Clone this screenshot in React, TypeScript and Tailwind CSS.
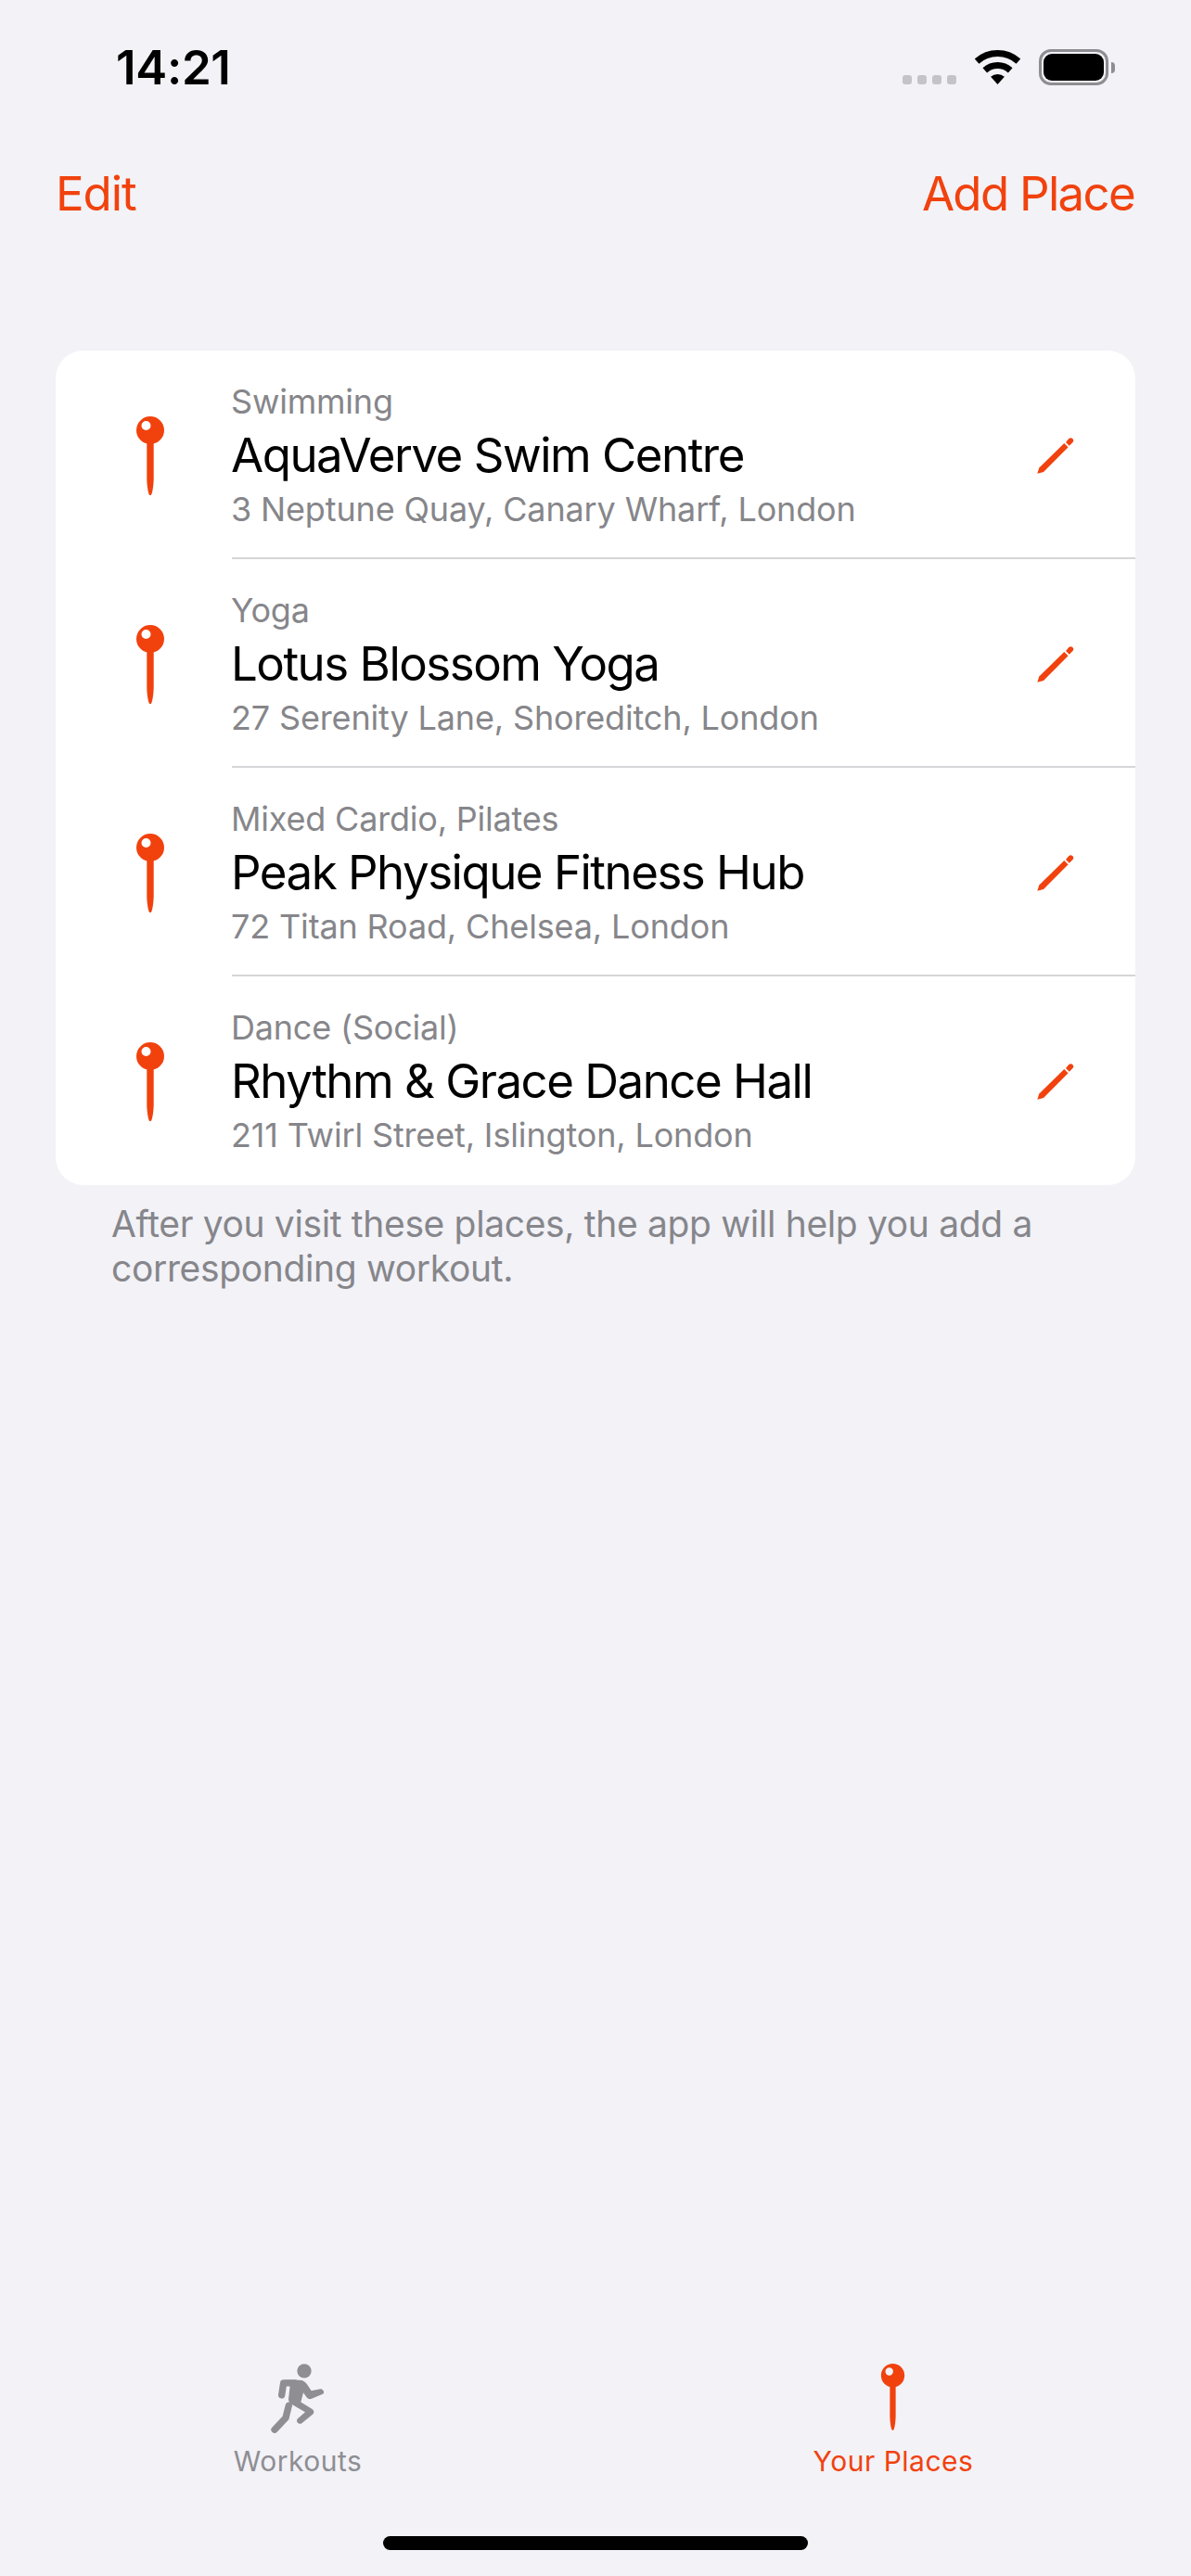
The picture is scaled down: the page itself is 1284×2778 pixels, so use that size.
import React from "react";

const places = [
  { tag: "Swimming", name: "AquaVerve Swim Centre", address: "3 Neptune Quay, Canary Wharf, London" },
  { tag: "Yoga", name: "Lotus Blossom Yoga", address: "27 Serenity Lane, Shoreditch, London" },
  { tag: "Mixed Cardio, Pilates", name: "Peak Physique Fitness Hub", address: "72 Titan Road, Chelsea, London" },
  { tag: "Dance (Social)", name: "Rhythm & Grace Dance Hall", address: "211 Twirl Street, Islington, London" },
];

function Pin({ className }: { className: string }) {
  return (
    <svg viewBox="0 0 32 86" className={className} fill="#F1420E">
      <path fillRule="evenodd" d="M16 1a15 15 0 1 1 0 30 15 15 0 0 1 0-30Zm-4.500 5a5 5 0 1 0 0 10 5 5 0 0 0 0-10Z" />
      <path d="M12.300 28h7.400v40c0 8-1.800 18-3 18h-1.400c-1.200 0-3-10-3-18Z" />
    </svg>
  );
}

function Pencil() {
  return (
    <svg viewBox="0 0 40 40" className="w-[40px] h-[40px]" fill="#F1420E">
      <path d="M0.300 39.700 2.300 33.600 29.300 7 33.600 11.300 7 38Z" />
      <path d="M31 6 34.300 2.100C35.500 0.900 37 0.900 38.300 2 39.500 3.200 39.700 4.800 38.500 6L34.800 9.700Z" />
    </svg>
  );
}

function Runner() {
  return (
    <svg viewBox="270 140 180 230" className="w-[60px] h-[77px]" fill="none" stroke="#8E8E93" strokeLinecap="round" strokeLinejoin="round">
      <circle cx="381" cy="166" r="23" fill="#8E8E93" stroke="none" />
      <path d="M352 205 314 205 308 244" strokeWidth="22" />
      <path d="M318 196H366C378 196 385 202 391 211L404 230 434 224C444 226 448 236 441 241L405 256C397 259 391 255 387 249L378 236 370 267 408 290C414 296 413 303 408 307L372 336C362 340 352 328 360 320L384 299 344 276C332 270 328 262 331 250L336 205Z" fill="#8E8E93" stroke="none" />
      <path d="M331 278 321 318 285 356" strokeWidth="22" />
    </svg>
  );
}

export default function App() {
  return (
    <div className="w-[1284px] h-[2778px] flex flex-col bg-[#F2F2F7] font-['Inter','Noto_Sans',sans-serif] overflow-hidden">
      <div className="h-[178px] shrink-0 flex items-start justify-between pt-[50px] pl-[125px] pr-[82px]">
        <div className="text-[51px] leading-[46px] font-semibold text-black tracking-[-0.3px]">14:21</div>
        <div className="flex items-center pt-[3px]">
          <div className="flex gap-[6px] mt-[27px] mr-[20px]">
            <div className="w-[10px] h-[10px] rounded-[3px] bg-[#C4C4C8]" />
            <div className="w-[10px] h-[10px] rounded-[3px] bg-[#C4C4C8]" />
            <div className="w-[10px] h-[10px] rounded-[3px] bg-[#C4C4C8]" />
            <div className="w-[10px] h-[10px] rounded-[3px] bg-[#C4C4C8]" />
          </div>
          <svg viewBox="0 0 49 37" className="w-[49px] h-[37px] mr-[20px]">
            <path d="M2.100 12.100A33.500 33.500 0 0 1 46.900 12.100" fill="none" stroke="#000" strokeWidth="7" />
            <path d="M10.800 21.800A20.500 20.500 0 0 1 38.200 21.800" fill="none" stroke="#000" strokeWidth="7" />
            <path d="M24.500 37 17.100 28.800A11 11 0 0 1 31.900 28.800Z" fill="#000" />
          </svg>
          <div className="w-[75px] h-[39px] rounded-[13px] border-[3px] border-[#8E8E92] p-[2px]">
            <div className="w-full h-full rounded-[9px] bg-black" />
          </div>
          <div className="w-[4px] h-[12px] rounded-r-[4px] bg-[#8E8E92] ml-[3px]" />
        </div>
      </div>

      <div className="h-[62px] shrink-0 flex items-center justify-between pl-[60px] pr-[61px] text-[51px] leading-[62px] text-[#F1420E]">
        <span className="tracking-[-1.1px]">Edit</span>
        <span className="tracking-[-1.7px]">Add Place</span>
      </div>

      <div className="shrink-0 mt-[138px] mx-[60px] bg-white rounded-[30px] overflow-hidden">
        {places.map((p, i) => (
          <div key={p.name} className="relative h-[225px] flex items-center">
            <div className="w-[190px] shrink-0 flex justify-center pl-[14px]">
              <Pin className="w-[32px] h-[86px]" />
            </div>
            <div className="flex-1 min-w-0 flex flex-col ml-[-1px]">
              <div className="text-[36px] leading-[44px] text-[#86868A] tracking-[-0.2px]">{p.tag}</div>
              <div className="text-[51px] leading-[60px] mt-[6px] text-black tracking-[-1.5px]">{p.name}</div>
              <div className="text-[36px] leading-[44px] mt-[6px] text-[#86868A] tracking-[-0.15px]">{p.address}</div>
            </div>
            <div className="w-[106px] shrink-0 flex items-center">
              <Pencil />
            </div>
            {i < places.length - 1 && <div className="absolute left-[190px] right-0 bottom-0 h-[2px] bg-[#D6D6D8]" />}
          </div>
        ))}
      </div>

      <div className="shrink-0 mt-[18px] pl-[120px] pr-[60px] text-[39px] leading-[48px] text-[#86868B] tracking-[-0.35px]">
        After you visit these places, the app will help you add a corresponding workout.
      </div>

      <div className="flex-1" />

      <div className="shrink-0 grid grid-cols-2 h-[160px]">
        <div className="flex flex-col items-center">
          <Runner />
          <div className="text-[30px] leading-[36px] mt-[11px] text-[#8E8E93] tracking-[0.5px]">Workouts</div>
        </div>
        <div className="flex flex-col items-center">
          <div className="h-[77px] flex items-start pr-[2px]">
            <Pin className="w-[27px] h-[73px]" />
          </div>
          <div className="text-[30px] leading-[36px] mt-[11px] text-[#F1420E] tracking-[0.5px]">Your Places</div>
        </div>
      </div>
      <div className="shrink-0 h-[70px] flex justify-center pt-[27px]">
        <div className="w-[458px] h-[15px] rounded-full bg-black" />
      </div>
    </div>
  );
}
